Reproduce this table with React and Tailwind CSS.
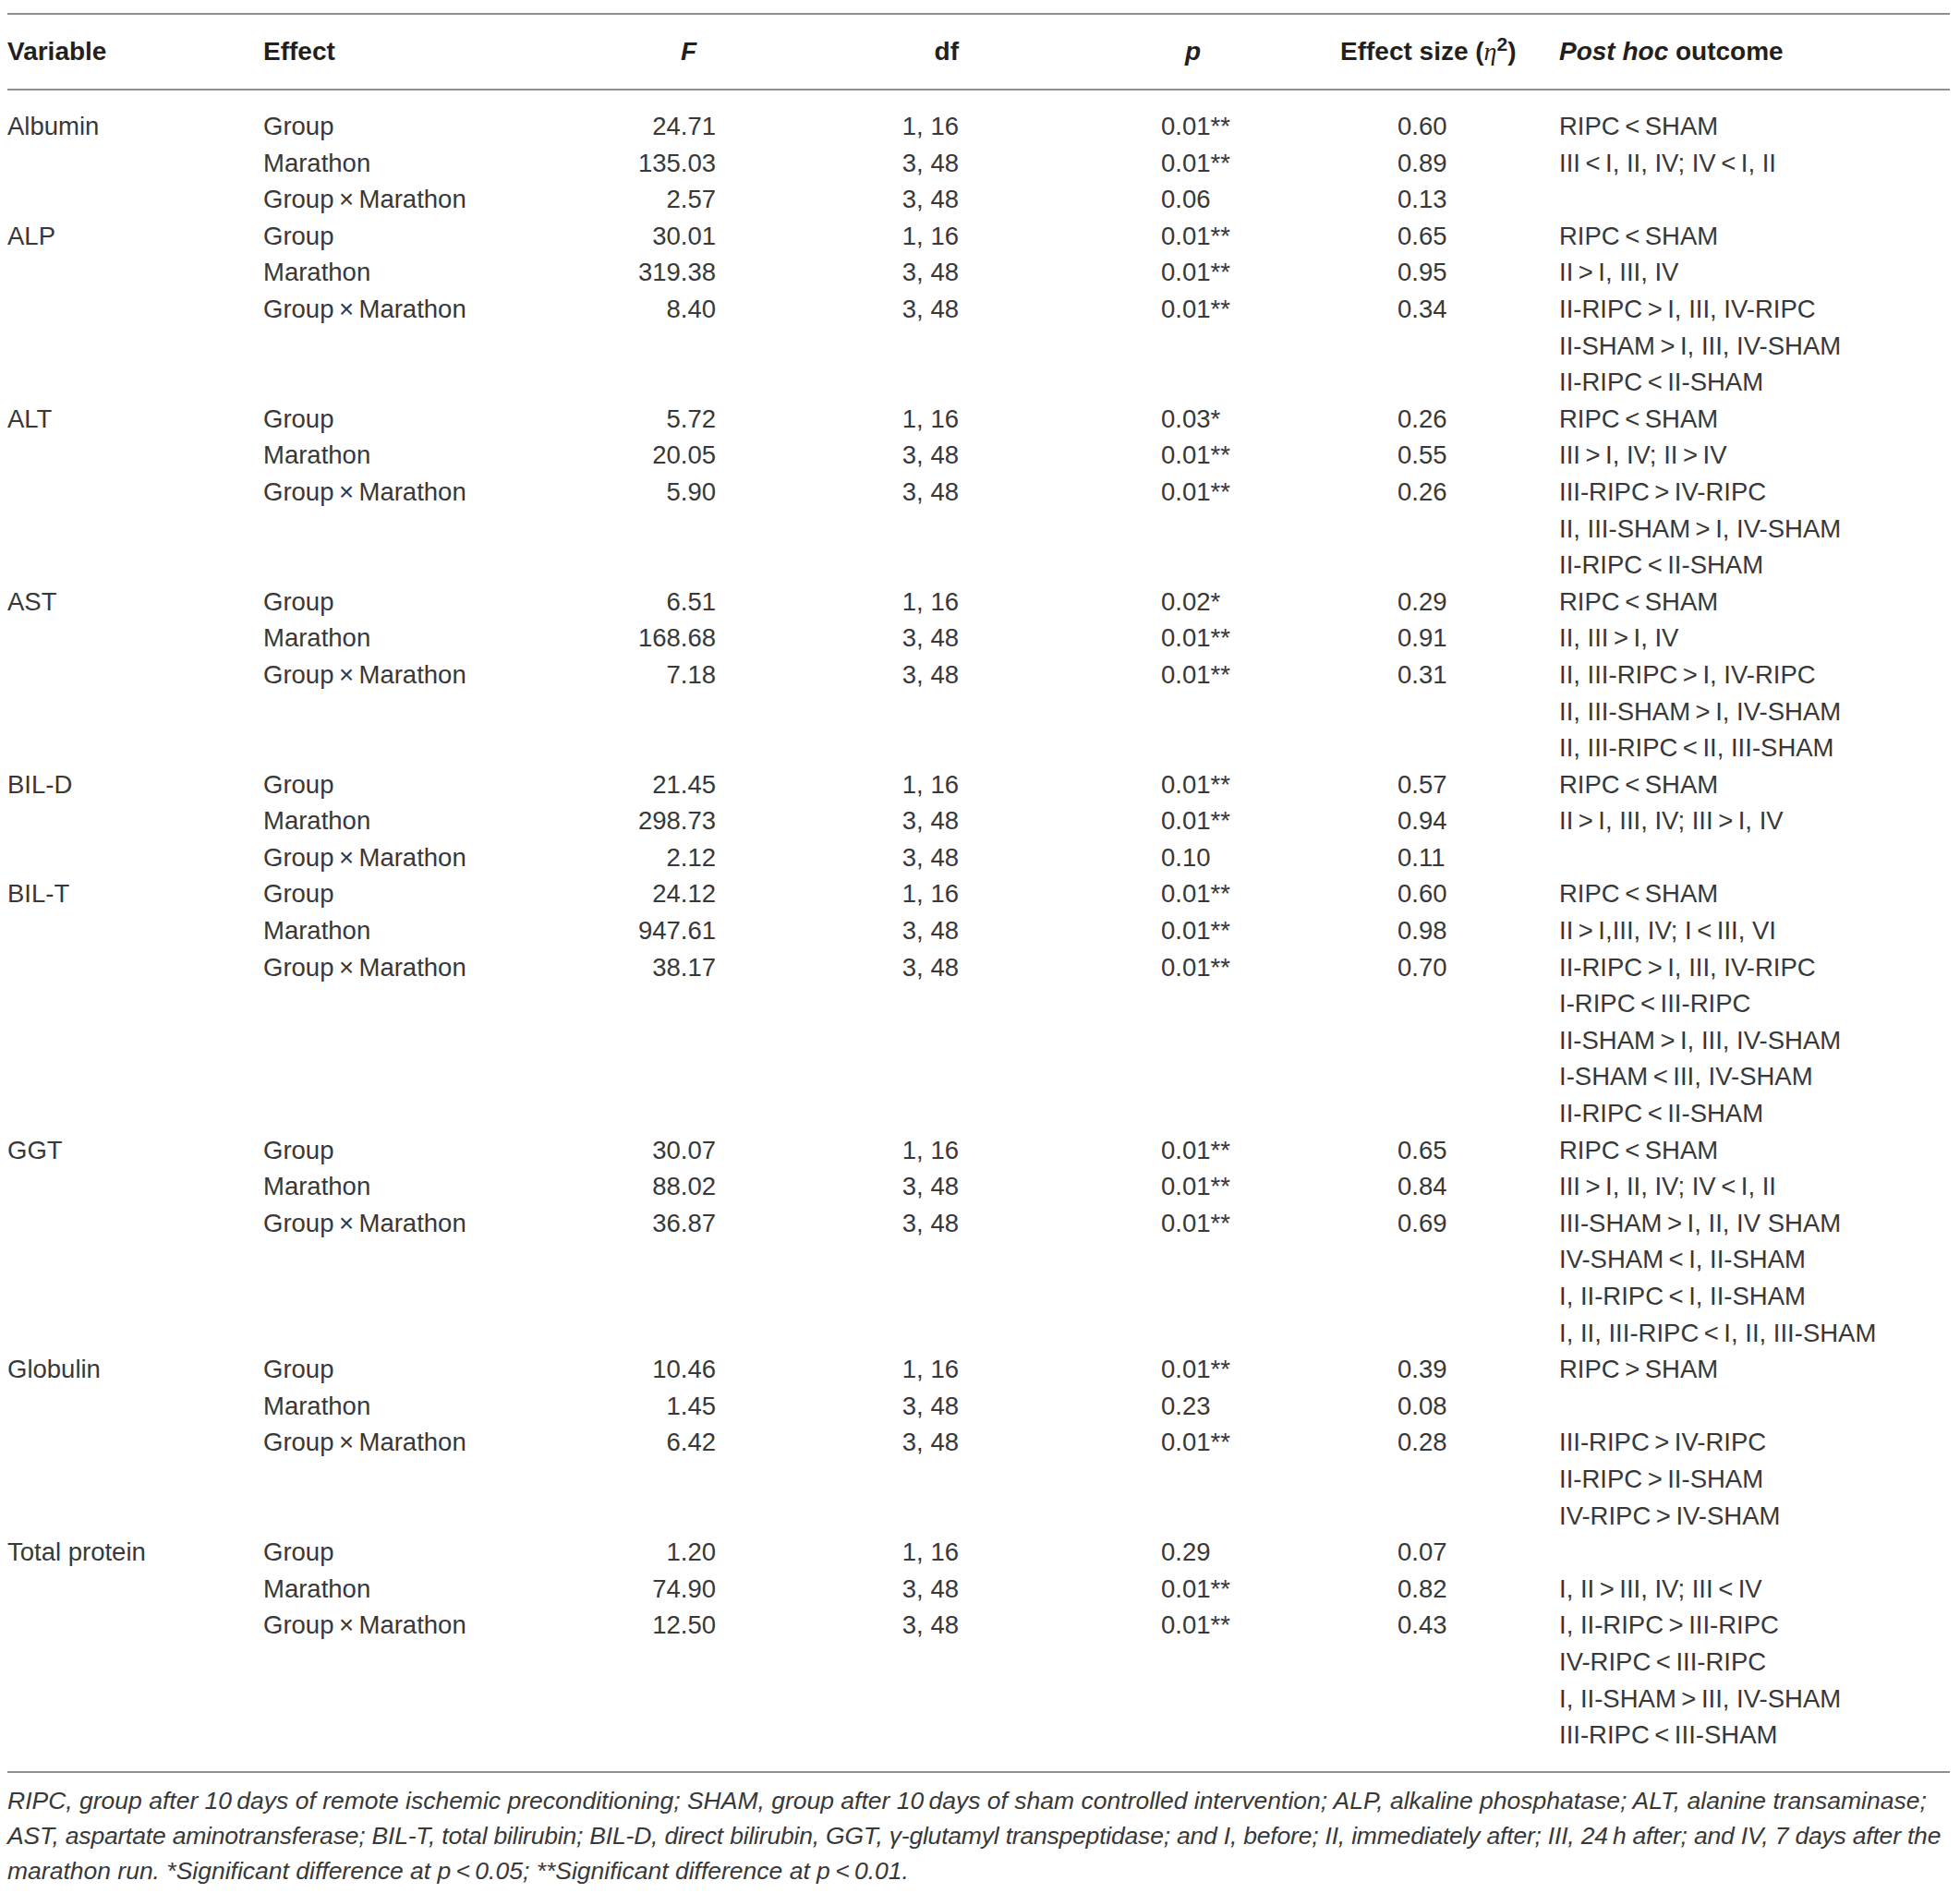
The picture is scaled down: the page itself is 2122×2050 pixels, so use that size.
import React from 'react';

// thin spaces around comparison signs, as in the printed table
const fmt = (s) => s.replace(/\s*([<>])\s*/g, '\u2009$1\u2009');

const GxM = 'Group\u2009×\u2009Marathon';

const DATA = [
  {
    name: 'Albumin',
    effects: [
      { effect: 'Group', F: '24.71', df: '1, 16', p: '0.01', sig: '**', es: '0.60', post: ['RIPC<SHAM'] },
      { effect: 'Marathon', F: '135.03', df: '3, 48', p: '0.01', sig: '**', es: '0.89', post: ['III<I, II, IV; IV<I, II'] },
      { effect: GxM, F: '2.57', df: '3, 48', p: '0.06', sig: '', es: '0.13', post: [] },
    ],
  },
  {
    name: 'ALP',
    effects: [
      { effect: 'Group', F: '30.01', df: '1, 16', p: '0.01', sig: '**', es: '0.65', post: ['RIPC<SHAM'] },
      { effect: 'Marathon', F: '319.38', df: '3, 48', p: '0.01', sig: '**', es: '0.95', post: ['II>I, III, IV'] },
      { effect: GxM, F: '8.40', df: '3, 48', p: '0.01', sig: '**', es: '0.34', post: ['II-RIPC>I, III, IV-RIPC', 'II-SHAM>I, III, IV-SHAM', 'II-RIPC<II-SHAM'] },
    ],
  },
  {
    name: 'ALT',
    effects: [
      { effect: 'Group', F: '5.72', df: '1, 16', p: '0.03', sig: '*', es: '0.26', post: ['RIPC<SHAM'] },
      { effect: 'Marathon', F: '20.05', df: '3, 48', p: '0.01', sig: '**', es: '0.55', post: ['III>I, IV; II>IV'] },
      { effect: GxM, F: '5.90', df: '3, 48', p: '0.01', sig: '**', es: '0.26', post: ['III-RIPC>IV-RIPC', 'II, III-SHAM>I, IV-SHAM', 'II-RIPC<II-SHAM'] },
    ],
  },
  {
    name: 'AST',
    effects: [
      { effect: 'Group', F: '6.51', df: '1, 16', p: '0.02', sig: '*', es: '0.29', post: ['RIPC<SHAM'] },
      { effect: 'Marathon', F: '168.68', df: '3, 48', p: '0.01', sig: '**', es: '0.91', post: ['II, III>I, IV'] },
      { effect: GxM, F: '7.18', df: '3, 48', p: '0.01', sig: '**', es: '0.31', post: ['II, III-RIPC>I, IV-RIPC', 'II, III-SHAM>I, IV-SHAM', 'II, III-RIPC<II, III-SHAM'] },
    ],
  },
  {
    name: 'BIL-D',
    effects: [
      { effect: 'Group', F: '21.45', df: '1, 16', p: '0.01', sig: '**', es: '0.57', post: ['RIPC<SHAM'] },
      { effect: 'Marathon', F: '298.73', df: '3, 48', p: '0.01', sig: '**', es: '0.94', post: ['II>I, III, IV; III>I, IV'] },
      { effect: GxM, F: '2.12', df: '3, 48', p: '0.10', sig: '', es: '0.11', post: [] },
    ],
  },
  {
    name: 'BIL-T',
    effects: [
      { effect: 'Group', F: '24.12', df: '1, 16', p: '0.01', sig: '**', es: '0.60', post: ['RIPC<SHAM'] },
      { effect: 'Marathon', F: '947.61', df: '3, 48', p: '0.01', sig: '**', es: '0.98', post: ['II>I,III, IV; I<III, VI'] },
      { effect: GxM, F: '38.17', df: '3, 48', p: '0.01', sig: '**', es: '0.70', post: ['II-RIPC>I, III, IV-RIPC', 'I-RIPC<III-RIPC', 'II-SHAM>I, III, IV-SHAM', 'I-SHAM<III, IV-SHAM', 'II-RIPC<II-SHAM'] },
    ],
  },
  {
    name: 'GGT',
    effects: [
      { effect: 'Group', F: '30.07', df: '1, 16', p: '0.01', sig: '**', es: '0.65', post: ['RIPC<SHAM'] },
      { effect: 'Marathon', F: '88.02', df: '3, 48', p: '0.01', sig: '**', es: '0.84', post: ['III>I, II, IV; IV<I, II'] },
      { effect: GxM, F: '36.87', df: '3, 48', p: '0.01', sig: '**', es: '0.69', post: ['III-SHAM>I, II, IV SHAM', 'IV-SHAM<I, II-SHAM', 'I, II-RIPC<I, II-SHAM', 'I, II, III-RIPC<I, II, III-SHAM'] },
    ],
  },
  {
    name: 'Globulin',
    effects: [
      { effect: 'Group', F: '10.46', df: '1, 16', p: '0.01', sig: '**', es: '0.39', post: ['RIPC>SHAM'] },
      { effect: 'Marathon', F: '1.45', df: '3, 48', p: '0.23', sig: '', es: '0.08', post: [] },
      { effect: GxM, F: '6.42', df: '3, 48', p: '0.01', sig: '**', es: '0.28', post: ['III-RIPC>IV-RIPC', 'II-RIPC>II-SHAM', 'IV-RIPC>IV-SHAM'] },
    ],
  },
  {
    name: 'Total protein',
    effects: [
      { effect: 'Group', F: '1.20', df: '1, 16', p: '0.29', sig: '', es: '0.07', post: [] },
      { effect: 'Marathon', F: '74.90', df: '3, 48', p: '0.01', sig: '**', es: '0.82', post: ['I, II>III, IV; III<IV'] },
      { effect: GxM, F: '12.50', df: '3, 48', p: '0.01', sig: '**', es: '0.43', post: ['I, II-RIPC>III-RIPC', 'IV-RIPC<III-RIPC', 'I, II-SHAM>III, IV-SHAM', 'III-RIPC<III-SHAM'] },
    ],
  },
];

// one flat list of printed lines
function buildRows() {
  const rows = [];
  DATA.forEach((v) => {
    v.effects.forEach((e, i) => {
      rows.push({ ...e, name: i === 0 ? v.name : '', postLine: e.post[0] || '' });
      e.post.slice(1).forEach((line) => {
        rows.push({ name: '', effect: '', F: '', df: '', p: '', sig: '', es: '', postLine: line });
      });
    });
  });
  return rows;
}

function HeaderRow() {
  return (
    <div className="grid grid-cols-[277px_340px_150px_263px_413px_237px_1fr] h-[84px] border-y-2 border-[#8f8f8f] leading-[80px] text-[28px] font-bold text-[#231f20]">
      <div>Variable</div>
      <div>Effect</div>
      <div className="text-right pr-[21px] italic">F</div>
      <div className="text-right">df</div>
      <div className="pl-[245px] italic">p</div>
      <div className="whitespace-nowrap">
        Effect size (<span className="italic font-normal font-['Liberation_Serif',serif]">η</span>
        <sup>2</sup>)
      </div>
      <div>
        <span className="italic">Post hoc</span> outcome
      </div>
    </div>
  );
}

function BodyRow({ row }) {
  return (
    <div className="grid grid-cols-[277px_340px_150px_263px_475px_175px_1fr] h-[39.6px] leading-[39.6px] whitespace-nowrap">
      <div>{row.name}</div>
      <div>{row.effect}</div>
      <div className="text-right">{row.F}</div>
      <div className="text-right">{row.df}</div>
      <div className="pl-[219px]">
        {row.p}
        {row.sig}
      </div>
      <div>{row.es}</div>
      <div>{fmt(row.postLine)}</div>
    </div>
  );
}

export default function App() {
  const rows = buildRows();

  return (
    <div className="w-[2122px] min-h-[2050px] bg-white pt-[14px] pl-[8px] overflow-hidden font-['Liberation_Sans',Arial,sans-serif] text-[#383838]">
      <div className="w-[2103px]">
        <HeaderRow />

        <div className="pt-[19px] pb-[19px] border-b-2 border-[#8f8f8f] text-[27.5px]">
          {rows.map((row, i) => (
            <BodyRow key={i} row={row} />
          ))}
        </div>

        {/* Footnote */}
        <div className="pt-[11px] text-[26.5px] leading-[38px] italic whitespace-nowrap">
          <div>
            RIPC, group after 10{'\u2009'}days of remote ischemic preconditioning; SHAM, group after 10{'\u2009'}days of sham controlled intervention; ALP, alkaline phosphatase; ALT, alanine transaminase;
          </div>
          <div className="tracking-[-0.2px]">
            AST, aspartate aminotransferase; BIL-T, total bilirubin; BIL-D, direct bilirubin, GGT, γ-glutamyl transpeptidase; and I, before; II, immediately after; III, 24{'\u2009'}h after; and IV, 7 days after the
          </div>
          <div>
            marathon run. *Significant difference at p{'\u2009'}&lt;{'\u2009'}0.05; **Significant difference at p{'\u2009'}&lt;{'\u2009'}0.01.
          </div>
        </div>
      </div>
    </div>
  );
}
